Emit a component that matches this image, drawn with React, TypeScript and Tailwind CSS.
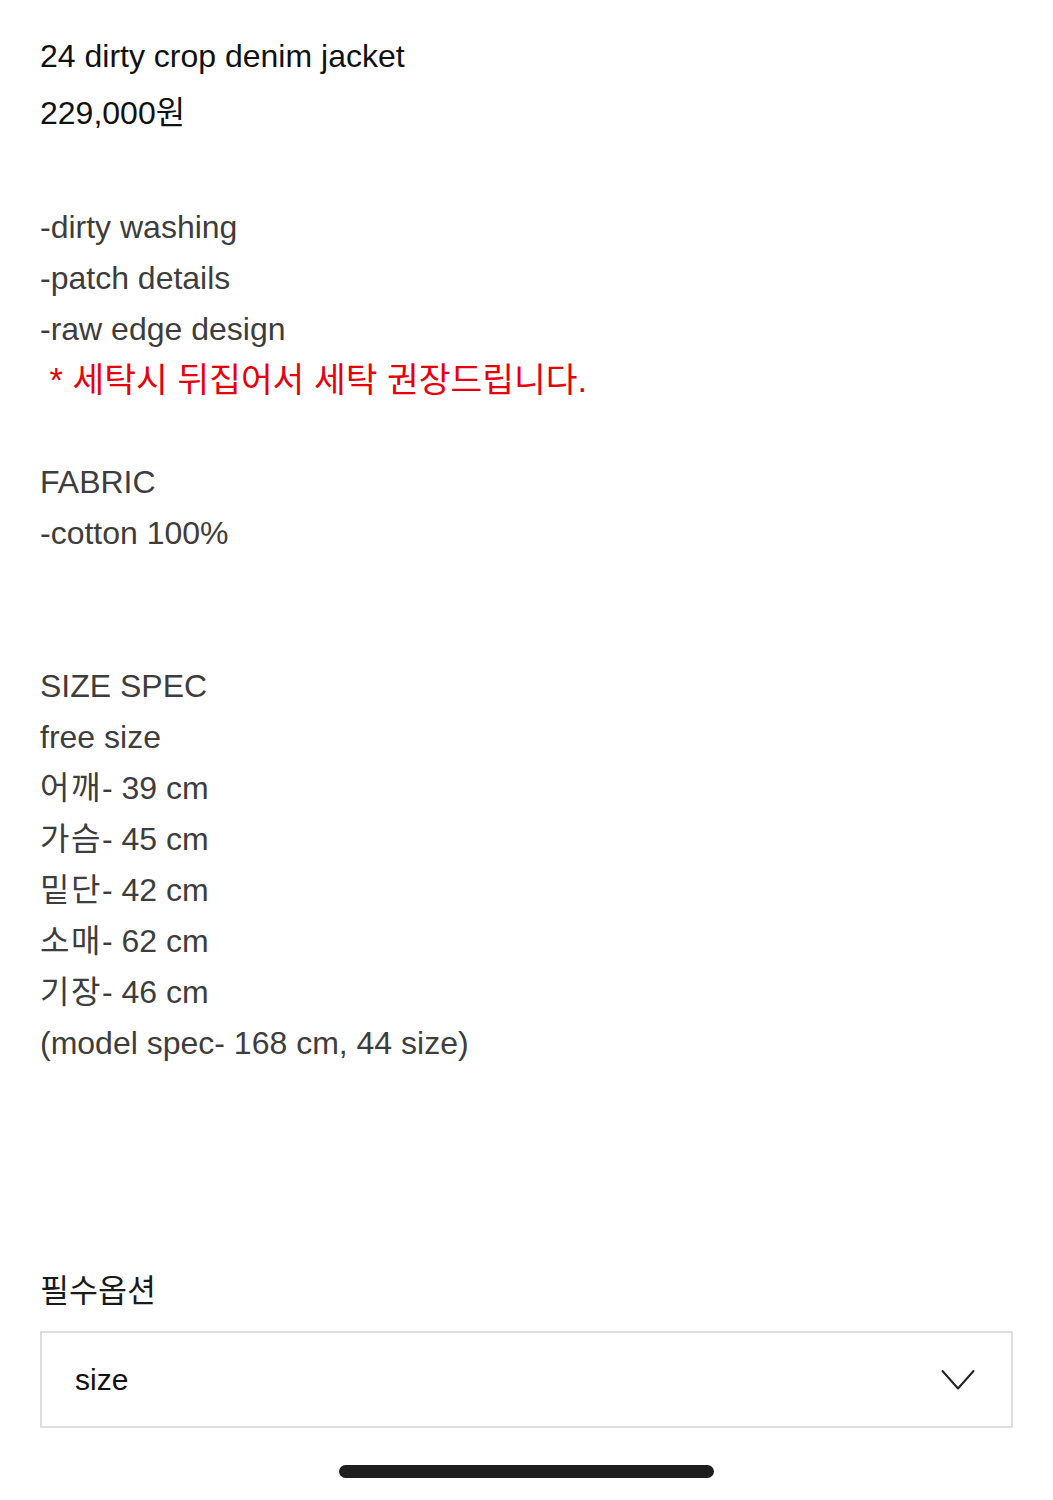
const font = '[font-family:"Liberation_Sans","Noto_Sans_CJK_KR",sans-serif]'

const features = ['-dirty washing', '-patch details', '-raw edge design']

const sizes = [
  ['어깨', '39'],
  ['가슴', '45'],
  ['밑단', '42'],
  ['소매', '62'],
  ['기장', '46'],
]

function Line({ children, className = '' }: { children?: React.ReactNode; className?: string }) {
  return <p className={`h-[51px] leading-[51px] ${className}`}>{children}</p>
}

export default function App() {
  return (
    <div className={`min-h-[1500px] bg-white px-[40px] pt-[28px] ${font}`}>
      <h1 className="h-[57px] text-[32px] leading-[57px] text-[#111]">24 dirty crop denim jacket</h1>
      <p className="h-[57px] text-[32px] leading-[57px] text-[#111]">229,000원</p>

      <div className="mt-[60px] text-[32px] text-[#3d3d3d]">
        {features.map((f) => (
          <Line key={f}>{f}</Line>
        ))}
        <Line className="text-[34.5px] text-[#e8000b]">&nbsp;* 세탁시 뒤집어서 세탁 권장드립니다.</Line>
        <Line />
        <Line>FABRIC</Line>
        <Line>-cotton 100%</Line>
        <Line />
        <Line />
        <Line>SIZE SPEC</Line>
        <Line>free size</Line>
        {sizes.map(([k, v]) => (
          <Line key={k}>
            <span className="tracking-[1.5px]">{k}</span>- {v} cm
          </Line>
        ))}
        <Line>(model spec- 168 cm, 44 size)</Line>
      </div>

      <p className="mt-[197px] h-[51px] text-[31.5px] leading-[51px] text-[#1a1a1a]">필수옵션</p>

      <div className="mt-[14px] flex h-[97px] items-center justify-between border-2 border-[#dedede] pl-[33px] pr-[36px]">
        <span className="text-[30px] text-[#111]">size</span>
        <svg width="34" height="22" viewBox="0 0 34 22" fill="none">
          <path d="M1.5 2L17 19.5L32.5 2" stroke="#222" strokeWidth="2" strokeLinecap="round" strokeLinejoin="round" />
        </svg>
      </div>

      <div className="mt-[37px] flex justify-center">
        <div className="h-[13px] w-[375px] rounded-full bg-[#1e1e1e]" />
      </div>
    </div>
  )
}
